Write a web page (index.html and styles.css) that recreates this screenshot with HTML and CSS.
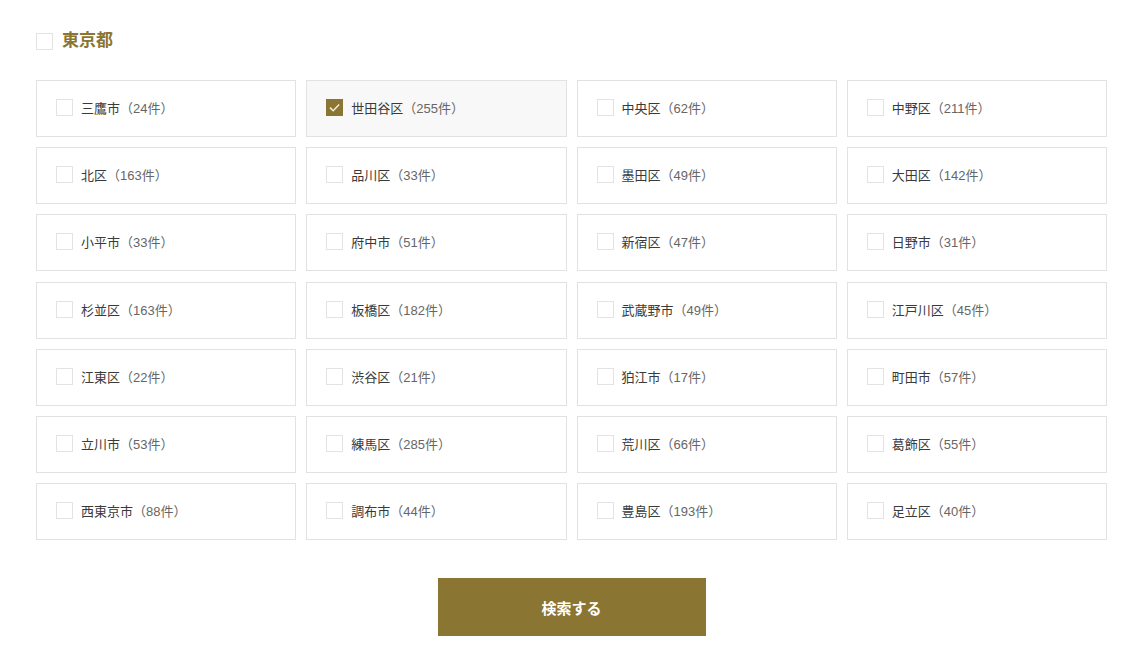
FILE: index.html
```html
<!DOCTYPE html>
<html lang="ja">
<head>
<meta charset="utf-8">
<link rel="stylesheet" href="styles.css">
</head>
<body>
<div class="wrap">
  <label class="pref">
    <span class="box"></span>
    <span class="pref-name">東京都</span>
  </label>
  <div class="grid">
    <label class="item"><span class="box"></span><span class="name">三鷹市</span><span class="count">（24件）</span></label>
    <label class="item checked"><span class="box"><svg class="check" viewBox="0 0 17 17" width="17" height="17"><path d="M4 8.6l3.2 3.2L13.2 5.6" fill="none" stroke="#f3ecd8" stroke-width="1.5"/></svg></span><span class="name">世田谷区</span><span class="count">（255件）</span></label>
    <label class="item"><span class="box"></span><span class="name">中央区</span><span class="count">（62件）</span></label>
    <label class="item"><span class="box"></span><span class="name">中野区</span><span class="count">（211件）</span></label>

    <label class="item"><span class="box"></span><span class="name">北区</span><span class="count">（163件）</span></label>
    <label class="item"><span class="box"></span><span class="name">品川区</span><span class="count">（33件）</span></label>
    <label class="item"><span class="box"></span><span class="name">墨田区</span><span class="count">（49件）</span></label>
    <label class="item"><span class="box"></span><span class="name">大田区</span><span class="count">（142件）</span></label>

    <label class="item"><span class="box"></span><span class="name">小平市</span><span class="count">（33件）</span></label>
    <label class="item"><span class="box"></span><span class="name">府中市</span><span class="count">（51件）</span></label>
    <label class="item"><span class="box"></span><span class="name">新宿区</span><span class="count">（47件）</span></label>
    <label class="item"><span class="box"></span><span class="name">日野市</span><span class="count">（31件）</span></label>

    <label class="item"><span class="box"></span><span class="name">杉並区</span><span class="count">（163件）</span></label>
    <label class="item"><span class="box"></span><span class="name">板橋区</span><span class="count">（182件）</span></label>
    <label class="item"><span class="box"></span><span class="name">武蔵野市</span><span class="count">（49件）</span></label>
    <label class="item"><span class="box"></span><span class="name">江戸川区</span><span class="count">（45件）</span></label>

    <label class="item"><span class="box"></span><span class="name">江東区</span><span class="count">（22件）</span></label>
    <label class="item"><span class="box"></span><span class="name">渋谷区</span><span class="count">（21件）</span></label>
    <label class="item"><span class="box"></span><span class="name">狛江市</span><span class="count">（17件）</span></label>
    <label class="item"><span class="box"></span><span class="name">町田市</span><span class="count">（57件）</span></label>

    <label class="item"><span class="box"></span><span class="name">立川市</span><span class="count">（53件）</span></label>
    <label class="item"><span class="box"></span><span class="name">練馬区</span><span class="count">（285件）</span></label>
    <label class="item"><span class="box"></span><span class="name">荒川区</span><span class="count">（66件）</span></label>
    <label class="item"><span class="box"></span><span class="name">葛飾区</span><span class="count">（55件）</span></label>

    <label class="item"><span class="box"></span><span class="name">西東京市</span><span class="count">（88件）</span></label>
    <label class="item"><span class="box"></span><span class="name">調布市</span><span class="count">（44件）</span></label>
    <label class="item"><span class="box"></span><span class="name">豊島区</span><span class="count">（193件）</span></label>
    <label class="item"><span class="box"></span><span class="name">足立区</span><span class="count">（40件）</span></label>
  </div>
  <div class="actions">
    <button class="search">検索する</button>
  </div>
</div>
</body>
</html>
```
FILE: styles.css
```css
* { box-sizing: border-box; }
html, body { margin: 0; padding: 0; background: #fff; }
body {
  font-family: "Liberation Sans", "Noto Sans CJK JP", sans-serif;
  color: #333;
}
.wrap {
  width: 1071px;
  margin-left: 36px;
  padding-top: 33px;
}
.pref {
  display: flex;
  align-items: center;
  gap: 9px;
  height: 17px;
}
.box {
  position: relative;
  width: 17px;
  height: 17px;
  border: 1px solid #e3e3e3;
  background: #fff;
  flex: none;
}
.check {
  position: absolute;
  left: -1px;
  top: -1px;
}
.pref-name {
  font-size: 17px;
  font-weight: bold;
  color: #8b7532;
  line-height: 17px;
  margin-top: -2px;
}
.grid {
  margin-top: 30px;
  display: grid;
  grid-template-columns: repeat(4, 1fr);
  column-gap: 10px;
  row-gap: 10.2px;
}
.item {
  height: 57px;
  border: 1px solid #e2e2e2;
  display: flex;
  align-items: center;
  padding-left: 19px;
  padding-bottom: 2px;
  font-size: 13px;
  background: #fff;
}
.item .box { margin-right: 8px; }
.item.checked { background: #f8f8f8; }
.item.checked .box { background: #8b7532; border-color: #8b7532; }
.name { color: #3a3a3a; }
.count { color: #666; }
.actions {
  display: flex;
  justify-content: center;
  margin-top: 38px;
}
.search {
  width: 268px;
  height: 58px;
  background: #8b7532;
  border: none;
  color: #fff;
  font-family: "Liberation Sans", "Noto Sans CJK JP", sans-serif;
  font-size: 15px;
  font-weight: bold;
  margin-left: 0;
}
```
